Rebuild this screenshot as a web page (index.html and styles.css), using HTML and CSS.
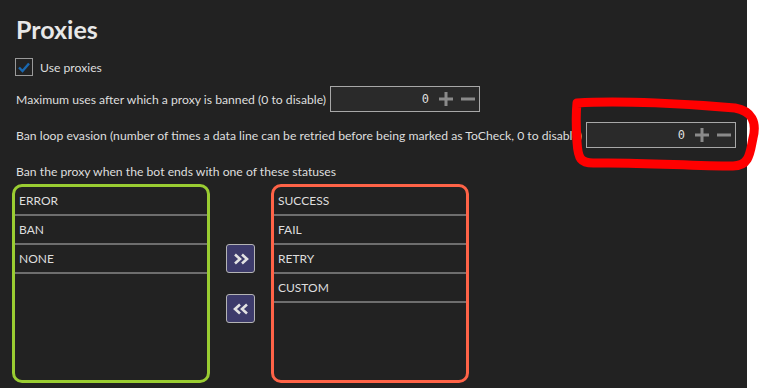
FILE: index.html
```html
<!DOCTYPE html>
<html lang="en">
<head>
  <meta charset="UTF-8" />
  <meta name="viewport" content="width=device-width, initial-scale=1.0"/>
  <title>Proxies</title>
  <link rel="stylesheet" href="styles.css">
</head>
<body>
  <div class="panel">
    <div class="title">Proxies</div>

    <label class="check-row">
      <span class="checkbox">
        <svg width="16" height="16" viewBox="0 0 16 16"><path d="M3 8.5 L6.5 12 L13 4.5" fill="none" stroke="#1a68b0" stroke-width="2.4"/></svg>
      </span>
      <span>Use proxies</span>
    </label>

    <div class="field-row">
      <span class="field-label">Maximum uses after which a proxy is banned (0 to disable)</span>
      <div class="num-input">
        <span class="num-value">0</span>
        <svg class="num-btn" width="14" height="14" viewBox="0 0 14 14"><path d="M0 7 H14 M7 0 V14" stroke="#8a8a8a" stroke-width="3"/></svg>
        <svg class="num-btn" width="14" height="14" viewBox="0 0 14 14"><path d="M0 7 H14" stroke="#8a8a8a" stroke-width="3"/></svg>
      </div>
    </div>

    <div class="field-row">
      <span class="field-label">Ban loop evasion (number of times a data line can be retried before being marked as ToCheck, 0 to disable)</span>
      <div class="num-input">
        <span class="num-value">0</span>
        <svg class="num-btn" width="14" height="14" viewBox="0 0 14 14"><path d="M0 7 H14 M7 0 V14" stroke="#8a8a8a" stroke-width="3"/></svg>
        <svg class="num-btn" width="14" height="14" viewBox="0 0 14 14"><path d="M0 7 H14" stroke="#8a8a8a" stroke-width="3"/></svg>
      </div>
    </div>

    <div class="section-label">Ban the proxy when the bot ends with one of these statuses</div>

    <div class="status-lists">
      <ul class="status-list banned">
        <li>ERROR</li>
        <li>BAN</li>
        <li>NONE</li>
      </ul>
      <div class="move-buttons">
        <button class="move-btn">
          <svg width="16" height="12" viewBox="0 0 16 12"><path d="M2 1.5 L7 6 L2 10.5 M9 1.5 L14 6 L9 10.5" fill="none" stroke="#e2e2e2" stroke-width="2.6"/></svg>
        </button>
        <button class="move-btn">
          <svg width="16" height="12" viewBox="0 0 16 12"><path d="M7 1.5 L2 6 L7 10.5 M14 1.5 L9 6 L14 10.5" fill="none" stroke="#e2e2e2" stroke-width="2.6"/></svg>
        </button>
      </div>
      <ul class="status-list allowed">
        <li>SUCCESS</li>
        <li>FAIL</li>
        <li>RETRY</li>
        <li>CUSTOM</li>
      </ul>
    </div>

    <!-- hand-drawn red marker round the second input -->
    <svg class="annotation" width="760" height="388" viewBox="0 0 760 388">
      <path d="M577 103 C 620 100, 690 104, 735 108 C 752 111, 757 122, 753 138 C 750 152, 750 166, 733 166 C 690 166, 640 162, 596 163 C 580 164, 578 158, 577 142 C 576 126, 576 112, 577 103 Z" fill="none" stroke="#ff0000" stroke-width="9" stroke-linejoin="round"/>
    </svg>
  </div>
</body>
</html>
```

FILE: styles.css
```css
html, body {
  margin: 0;
  padding: 0;
  background: #ffffff;
  font-family: Lato, "Liberation Sans", sans-serif;
  font-size: 12.2px;
  color: #dedede;
  overflow: hidden;
}
.panel {
  position: relative;
  width: 747px;
  height: 388px;
  box-sizing: border-box;
  padding: 13px 10px 0 16px;
  background: #222222;
}
.title {
  font-size: 25px;
  font-weight: bold;
  line-height: 32px;
  color: #e8e8e8;
}
.check-row {
  display: flex;
  align-items: center;
  gap: 7px;
  height: 18px;
  margin: 13px 0 0 -1px;
}
.checkbox {
  width: 18px;
  height: 18px;
  box-sizing: border-box;
  border: 1px solid #9a9a9a;
  display: flex;
  align-items: center;
  justify-content: center;
}
.field-row {
  display: flex;
  align-items: center;
  gap: 4px;
  height: 26px;
  margin-top: 10px;
}
.field-label {
  flex: 0 1 auto;
  min-width: 0;
  overflow: hidden;
  white-space: nowrap;
}
.num-input {
  flex-shrink: 0;
  width: 150px;
  height: 26px;
  box-sizing: border-box;
  border: 1px solid #a8a8a8;
  background: #2a2a2a;
  display: flex;
  align-items: center;
  justify-content: flex-end;
  padding-right: 4px;
}
.num-value {
  font-family: "DejaVu Sans Mono", "Liberation Mono", monospace;
  font-size: 12px;
  margin-right: 10px;
}
.num-btn + .num-btn {
  margin-left: 8px;
}
.section-label {
  margin-top: 16px;
  line-height: 16px;
}
.status-lists {
  display: flex;
  margin: 4px 0 0 -4px;
}
.status-list {
  list-style: none;
  margin: 0;
  padding: 0;
  width: 198px;
  height: 199px;
  box-sizing: border-box;
  border: 3px solid;
  border-radius: 10px;
  overflow: hidden;
  font-size: 12px;
}
.status-list.banned {
  border-color: #9acd32;
}
.status-list.allowed {
  border-color: #ff6347;
}
.status-list li {
  height: 27px;
  line-height: 27px;
  padding-left: 4px;
  border-bottom: 2px solid #6e6e6e;
}
.move-buttons {
  width: 61px;
  display: flex;
  flex-direction: column;
  align-items: center;
  justify-content: center;
  gap: 21px;
}
.move-btn {
  width: 29px;
  height: 29px;
  padding: 0;
  border: 1px solid #b4b4b4;
  border-radius: 3px;
  background: #3d3b6b;
  display: flex;
  align-items: center;
  justify-content: center;
}
.annotation {
  position: absolute;
  left: 0;
  top: 0;
  pointer-events: none;
}
```
